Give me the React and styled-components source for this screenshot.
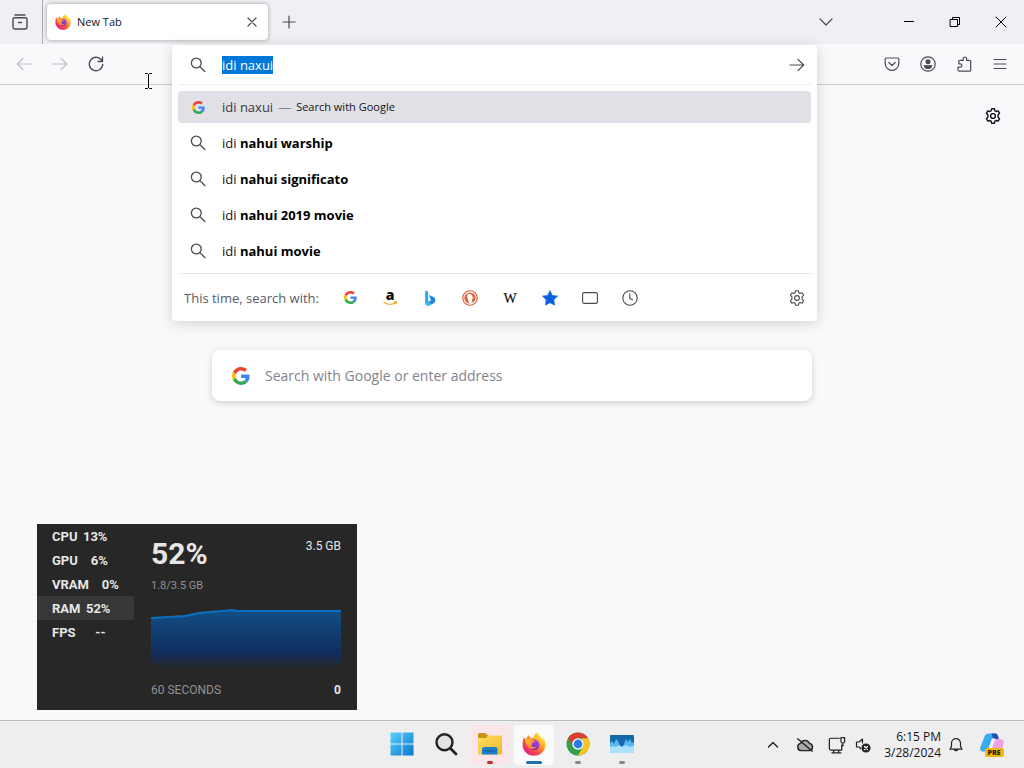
import React, { useEffect, useId, useRef } from "react";
import styled, { createGlobalStyle } from "styled-components";

const GlobalStyle = createGlobalStyle`
  * { box-sizing: border-box; }
  body {
    margin: 0;
    background: #f9f9fb;
    color: #15141a;
    font-family: "Open Sans", "Noto Sans", sans-serif;
    font-size: 13px;
  }
  button, input { font: inherit; color: inherit; }
  svg { display: block; flex: none; }
`;

/* ---------- shared parts ---------- */

const IconButton = styled.button`
  display: flex;
  align-items: center;
  justify-content: center;
  width: ${(p) => p.$w || 36}px;
  height: ${(p) => p.$h || 32}px;
  flex: none;
  padding: 0;
  border: 0;
  border-radius: 4px;
  background: transparent;
  color: ${(p) => p.$color || "#4a4a52"};
`;

const IconSlot = styled.span`
  display: flex;
  justify-content: center;
  width: 16px;
  flex: none;
  color: #4a4a52;
`;

const Line = ({ size = 16, width = 1.2, children }) => (
  <svg
    width={size}
    height={size}
    viewBox="0 0 16 16"
    fill="none"
    stroke="currentColor"
    strokeWidth={width}
    strokeLinecap="round"
    strokeLinejoin="round"
    aria-hidden="true"
  >
    {children}
  </svg>
);

/* ---------- icons ---------- */

const SearchIcon = () => (
  <Line width={1.3}>
    <circle cx="6.3" cy="6" r="4.9" />
    <path d="M9.9 9.6l4.9 4.9" />
  </Line>
);

const GearIcon = ({ width = 1.2 }) => (
  <Line width={width}>
    <path d="M6.6 0.8h2.8l.5 2 1.2.7 2-.7 1.5 2.5-1.500 1.400v2.600l1.500 1.400-1.500 2.500-2-.7-1.200.7-.5 2H6.600l-.5-2-1.200-.7-2 .7-1.500-2.500 1.500-1.400V6.700L1.400 5.300l1.500-2.500 2 .7 1.200-.7z" />
    <circle cx="8" cy="8" r="2.4" />
  </Line>
);

const ArrowIcon = ({ flip }) => (
  <Line size={16}>
    {flip ? <path d="M15 8H1.500M7 2.300L1.300 8 7 13.700" /> : <path d="M1 8h13.500M9 2.300L14.700 8 9 13.700" />}
  </Line>
);

const GoogleIcon = ({ size = 16 }) => (
  <svg width={size} height={size} viewBox="0 0 48 48" aria-hidden="true">
    <path fill="#ea4335" d="M24 9.500c3.540 0 6.710 1.220 9.210 3.600l6.850-6.850C35.900 2.380 30.470 0 24 0 14.620 0 6.510 5.380 2.560 13.220l7.980 6.190C12.430 13.720 17.740 9.500 24 9.500z" />
    <path fill="#4285f4" d="M46.980 24.550c0-1.570-.15-3.090-.38-4.550H24v9.020h12.940c-.58 2.960-2.260 5.480-4.780 7.180l7.730 6c4.510-4.180 7.090-10.360 7.090-17.650z" />
    <path fill="#fbbc05" d="M10.530 28.590c-.48-1.450-.76-2.990-.76-4.590s.27-3.140.76-4.590l-7.980-6.190C.92 16.460 0 20.120 0 24s.92 7.540 2.560 10.780z" />
    <path fill="#34a853" d="M24 48c6.480 0 11.930-2.130 15.890-5.810l-7.730-6c-2.150 1.450-4.920 2.300-8.160 2.300-6.260 0-11.570-4.220-13.470-9.910l-7.980 6.190C6.510 42.620 14.620 48 24 48z" />
  </svg>
);

const FirefoxIcon = ({ size }) => {
  const id = useId();
  return (
    <svg width={size} height={size} viewBox="0 0 24 24" aria-hidden="true">
      <defs>
        <linearGradient id={id + "a"} x1="0.850" y1="0.100" x2="0.150" y2="0.950">
          <stop offset="0" stopColor="#fff04a" />
          <stop offset="0.300" stopColor="#ffb029" />
          <stop offset="0.580" stopColor="#ff5a36" />
          <stop offset="1" stopColor="#e31587" />
        </linearGradient>
        <linearGradient id={id + "b"} x1="0.800" y1="0" x2="0.300" y2="1">
          <stop offset="0" stopColor="#b443e6" />
          <stop offset="1" stopColor="#5535c4" />
        </linearGradient>
        <linearGradient id={id + "c"} x1="0" y1="0" x2="1" y2="1">
          <stop offset="0" stopColor="#ffc928" />
          <stop offset="1" stopColor="#ff6636" />
        </linearGradient>
      </defs>
      <path fill={`url(#${id}a)`} d="M22.600 8.200c-.5-1.300-1.600-2.600-2.500-3 .7 1.400 1.100 2.700 1.200 3.600-1.300-3.300-3.600-4.600-5.400-7.500-.3-.5-.5-1-.5-1.300-2.500 1.500-3.500 4-3.700 5.500-1 .1-1.900.3-2.700.7-1.100-.8-2-2-2.100-3.100-1.200.8-1.800 1.900-2 3.200-.8.100-1.500.5-2 .9-.4-.4-.6-1.500-.6-2.200C1.200 6.500.6 9 .6 12.400.6 18.800 5.700 23.700 12 23.700s11.500-5 11.500-11.300c0-1.600-.3-3-.9-4.200z" />
      <circle cx="12.200" cy="12.800" r="5.200" fill={`url(#${id}b)`} />
      <path fill={`url(#${id}c)`} d="M3 7.700c2-1.200 4.600-1 6.200 0 1.300.9 3 .7 4.100 1-.1 1.400-2.500 1.800-3.100 2.400-.4.700.1 1.500-.9 2.300 1 1.700 3.300 1.900 5.600.8-1 2.500-4.200 3.500-7 2.100C4.700 14.700 3.700 11 3 7.700z" />
      <path fill="#ffcf33" d="M14.300 5.700c3.800.8 5.700 4.200 4.800 7.900 2-3.200.8-6.900-2.300-8.300z" />
    </svg>
  );
};

const AmazonIcon = () => (
  <svg width="16" height="28" viewBox="0 -6 16 28" aria-hidden="true">
    <text x="8" y="10" textAnchor="middle" fontFamily="Open Sans, sans-serif" fontWeight="800" fontSize="14" fill="#111">a</text>
    <path d="M1.500 12c3.500 3 9 3 12.300.5M12 12l2.500-.2-.5 2.300" fill="none" stroke="#e9b33b" strokeWidth="1.300" />
  </svg>
);

const BingIcon = () => (
  <svg width="16" height="16" viewBox="0 0 16 16" aria-hidden="true">
    <path d="M3.200 0.500l3 1.300v9.700L3.200 14.500z" fill="#2da3ee" />
    <path d="M7 5l4.500 2.100c2.700 1.500 2.200 5.200-.3 6.500l-3.700 1.800c-2 .7-4.300 0-4.300-2.400L9 10.500z" fill="#2583d8" />
    <path d="M3.200 12.500c.3 2.700 2.700 3.400 4.300 2.900l1.800-1-3.100-2.900z" fill="#37c3ea" />
  </svg>
);

const DuckIcon = () => (
  <svg width="16" height="16" viewBox="0 0 16 16" aria-hidden="true">
    <circle cx="8" cy="8" r="7.200" fill="#fff" stroke="#d95b37" strokeWidth="1.100" />
    <circle cx="8" cy="8" r="5.600" fill="#df643c" />
    <path d="M5.300 4.500c2-1.400 5-.5 5.100 2.200l1.500 1.200-2 .9.700 4.200c-1.200.6-2.300.7-3.400.4C6.300 10.500 4.800 7 5.300 4.500z" fill="#fff" />
    <path d="M8.500 8l3.500-.2-1.500 1.200z" fill="#f5b72f" />
    <path d="M9 11l2.300-.6v1.800z" fill="#59a648" />
  </svg>
);

const WikipediaIcon = () => (
  <svg width="18" height="18" viewBox="0 0 18 18" aria-hidden="true">
    <text x="9" y="14" textAnchor="middle" fontFamily="Liberation Serif, serif" fontSize="14" fill="#111" stroke="#111" strokeWidth="0.200">W</text>
  </svg>
);

const StarIcon = () => (
  <svg width="16" height="16" viewBox="0 0 16 16" aria-hidden="true">
    <path d="M8 .6l2.300 4.800 5.300.7-3.800 3.700.9 5.400L8 12.800l-4.700 2.400.9-5.400L.4 6.100l5.300-.7z" fill="#0a60df" stroke="#0a60df" strokeWidth="0.600" strokeLinejoin="round" />
  </svg>
);

const WindowsIcon = () => {
  const id = useId();
  return (
    <svg width="24" height="24" viewBox="0 0 24 24" aria-hidden="true">
      <defs>
        <linearGradient id={id} gradientUnits="userSpaceOnUse" x1="0" y1="0" x2="24" y2="24">
          <stop offset="0" stopColor="#5bd4fb" />
          <stop offset="1" stopColor="#0873cd" />
        </linearGradient>
      </defs>
      <path fill={`url(#${id})`} d="M.5.5h11v11H.5zM12.500 .5h11v11h-11zM.5 12.500h11v11H.5zM12.500 12.500h11v11h-11z" />
    </svg>
  );
};

const TaskSearchIcon = () => (
  <svg width="24" height="24" viewBox="0 0 24 24" fill="none" aria-hidden="true">
    <circle cx="10.500" cy="10.300" r="8" fill="#dfe1e4" stroke="#222" strokeWidth="2.400" />
    <path d="M16.500 16.500l5.500 5.500" stroke="#222" strokeWidth="2.800" strokeLinecap="round" />
  </svg>
);

const FolderIcon = () => {
  const id = useId();
  return (
    <svg width="26" height="24" viewBox="0 0 26 24" aria-hidden="true">
      <defs>
        <linearGradient id={id} x1="0" y1="0" x2="1" y2="1">
          <stop offset="0" stopColor="#ffdc60" />
          <stop offset="1" stopColor="#efb92c" />
        </linearGradient>
      </defs>
      <path d="M1 2.500A1.500 1.500 0 0 1 2.500 1h6l2.500 2.500V8H1z" fill="#cc9416" />
      <path d="M1 6h8l2-2.500h14V21a1.500 1.500 0 0 1-1.500 1.500h-21A1.500 1.500 0 0 1 1 21z" fill={`url(#${id})`} />
      <path d="M5 22.500v-5.500a2 2 0 0 1 2-2h11.500a2 2 0 0 1 2 2v5.500z" fill="#1c7fc9" />
      <path d="M7.500 19h10.500" stroke="#1562a5" strokeWidth="1.500" />
    </svg>
  );
};

const ChromeIcon = () => (
  <svg width="24" height="24" viewBox="0 0 48 48" aria-hidden="true">
    <circle cx="24" cy="24" r="23" fill="#34a04c" />
    <path d="M4.080 12.500A23 23 0 0 1 43.900 12.500H24a11.500 11.500 0 0 0-10 17.200z" fill="#dc3d31" />
    <path d="M43.900 12.500A23 23 0 0 1 24 47l10-17.300a11.500 11.500 0 0 0 0-11.400L30.500 12.500z" fill="#fbc420" />
    <circle cx="24" cy="24" r="11.500" fill="#fff" />
    <circle cx="24" cy="24" r="8.800" fill="#2c7be5" />
  </svg>
);

const MonitorIcon = () => (
  <svg width="26" height="20" viewBox="0 0 26 20" aria-hidden="true">
    <rect x="1" y="1" width="24" height="18" rx="1" fill="#1268aa" />
    <path d="M1 9l2-2 2 3 2-5 2 2 2 5 2 1 2-3 2-5 2 3 2-3 2 4 2-1v10.500H1z" fill="#58b9ee" />
    <path d="M1 13l3-1 3 1 3-2 3 2 4-2 3 2 5-1v6a1 1 0 0 1-1 1H2a1 1 0 0 1-1-1z" fill="#a9e2fc" />
  </svg>
);

const CopilotIcon = () => (
  <svg width="26" height="26" viewBox="0 0 26 26" aria-hidden="true">
    <path d="M5.500 4.500C6.300 2.500 7.500 1.500 9.500 1.500H16c2 0 2.700 1.500 3.200 3.500L20 8h-4.500l-3.500 9c-.7 1.800-1.500 2.500-3.500 2.500H4.500C1.500 19.500.6 17.500 1.400 15z" fill="#3aabef" />
    <path d="M12.500 1.500H16c2 0 2.700 1.500 3.200 3.500L20 8h-5.500z" fill="#2451b8" />
    <path d="M14.500 7H21c3 0 4.300 2 3.500 4.500L23 18H10.500z" fill="#efa3e5" />
    <path d="M13 6.500h3.500L12.500 17.500H9z" fill="#f5f2fa" />
    <rect x="6" y="16" width="19" height="9" rx="2" fill="#f2b70d" />
    <text x="15" y="23" textAnchor="middle" fontFamily="Open Sans, sans-serif" fontWeight="800" fontSize="7" fill="#251b00">PRE</text>
  </svg>
);

/* ---------- browser window ---------- */

const Screen = styled.div`
  display: flex;
  flex-direction: column;
  min-height: 100vh;
`;

const TabStrip = styled.header`
  display: flex;
  align-items: center;
  height: 44px;
  background: #f0f0f4;
`;

const ViewSlot = styled.div`
  display: flex;
  align-items: center;
  justify-content: center;
  width: 43px;
  height: 44px;
  padding-right: 2px;
  border-right: 1px solid #a9a9b4;
`;

const Tab = styled.div`
  display: flex;
  align-items: center;
  width: 221px;
  height: 36px;
  margin-left: 4px;
  padding: 0 0 0 8px;
  border-radius: 4px;
  background: #fff;
  box-shadow: 0 0 4px rgba(0, 0, 0, 0.35);
`;

const TabTitle = styled.span`
  flex: 1;
  padding-left: 6px;
  font-size: 11px;
  line-height: 20px;
`;

const WindowControls = styled.div`
  display: flex;
  align-items: center;
  margin-left: auto;
`;

const ListTabs = styled.div`
  padding-right: 42px;
`;

const Toolbar = styled.nav`
  display: flex;
  align-items: center;
  height: 41px;
  padding: 0 6px;
  border-bottom: 1px solid #cccccf;
`;

const UrlArea = styled.div`
  position: relative;
  flex: 1;
  align-self: stretch;
  margin: 0 57px 0 58px;
`;

const UrlPanel = styled.section`
  position: absolute;
  z-index: 2;
  top: 1px;
  left: 0;
  right: 0;
  padding: 0 6px;
  border-radius: 4px;
  background: #fff;
  box-shadow: 0 2px 14px rgba(0, 0, 0, 0.16);
`;

const UrlRow = styled.form`
  display: flex;
  align-items: center;
  height: 39px;
  padding-left: 12px;
`;

const UrlInput = styled.input`
  flex: 1;
  min-width: 0;
  height: 24px;
  margin-left: 16px;
  padding: 0;
  border: 0;
  outline: 0;
  background: transparent;
  &::selection { background: #0078d7; color: #fff; }
`;

const Results = styled.ul`
  display: flex;
  flex-direction: column;
  gap: 4px;
  margin: 0;
  padding: 6px 0;
  border-top: 1px solid #eeeef1;
  list-style: none;
`;

const Result = styled.li`
  display: flex;
  align-items: center;
  height: 32px;
  padding-left: 12px;
  border-radius: 4px;
  background: ${(p) => (p.$active ? "#e0e0e6" : "transparent")};
  color: ${(p) => (p.$active ? "#3a3944" : "#15141a")};
`;

const ResultText = styled.span`
  padding-left: 16px;
  line-height: 20px;
  b { color: #000; font-weight: 700; }
`;

const Action = styled.span`
  color: #15141a;
  font-size: 11px;
  line-height: 20px;
`;

const Dash = styled.span`
  padding: 0 5px;
  color: #85858f;
`;

const OneOffs = styled.footer`
  display: flex;
  align-items: center;
  height: 48px;
  margin: 0 0 0 3px;
  padding-left: 3px;
  border-top: 1px solid #e4e4e8;
`;

const OneOffLabel = styled.span`
  width: 146px;
  color: #5b5b66;
  line-height: 20px;
  white-space: nowrap;
`;

const Spacer = styled.div`
  flex: 1;
`;

const Page = styled.main`
  position: relative;
  flex: 1;
  display: flex;
  flex-direction: column;
`;

const PageTop = styled.div`
  display: flex;
  justify-content: flex-end;
  padding: 15px 13px 0;
`;

const HomeSearch = styled.label`
  display: flex;
  align-items: center;
  align-self: center;
  width: calc(100% - 48px);
  max-width: 600px;
  height: 51px;
  margin-top: 218px;
  padding: 0 20px;
  border-radius: 8px;
  background: #fff;
  box-shadow: 0 2px 6px rgba(58, 57, 68, 0.22);
`;

const HomeInput = styled.input`
  flex: 1;
  min-width: 0;
  height: 32px;
  margin-left: 15px;
  padding: 0;
  border: 0;
  outline: 0;
  background: transparent;
  font-size: 14px;
  &::placeholder { color: #83838c; opacity: 1; }
`;

/* ---------- performance overlay ---------- */

const Monitor = styled.aside`
  position: absolute;
  left: 37px;
  bottom: 10px;
  display: flex;
  width: 320px;
  height: 186px;
  background: #272727;
  color: #e6e6e6;
  font-family: Roboto, sans-serif;
`;

const Stats = styled.ul`
  width: 97px;
  margin: 0;
  padding: 0;
  list-style: none;
`;

const Stat = styled.li`
  display: flex;
  align-items: center;
  height: 24px;
  padding-left: 15px;
  background: ${(p) => (p.$active ? "#373737" : "transparent")};
  font-size: 13px;
  font-weight: 700;
`;

const StatValue = styled.span`
  min-width: 30px;
  padding-left: 5px;
  text-align: right;
`;

const Detail = styled.div`
  display: flex;
  flex: 1;
  flex-direction: column;
  padding: 12px 16px 10px 17px;
`;

const DetailRow = styled.div`
  display: flex;
  justify-content: space-between;
  font-size: 12px;
  line-height: 20px;
`;

const Big = styled.strong`
  font-size: 30px;
  line-height: 36px;
`;

const Muted = styled.span`
  color: #929292;
`;

const Usage = styled(Muted)`
  margin-top: 4px;
  font-size: 11px;
  line-height: 20px;
`;

const Chart = styled.svg`
  width: 100%;
  height: 64px;
  margin: 8px 0 12px;
`;

/* ---------- taskbar ---------- */

const Taskbar = styled.footer`
  display: grid;
  grid-template-columns: 1fr auto 1fr;
  align-items: center;
  height: 48px;
  border-top: 1px solid #bdbdc1;
  background: #eeeeef;
`;

const Apps = styled.div`
  grid-column: 2;
  display: flex;
  gap: 4px;
`;

const AppButton = styled.button`
  display: grid;
  grid-template-rows: 1fr 3px;
  justify-items: center;
  align-items: center;
  width: 40px;
  height: 40px;
  padding: 2px 0 1px;
  border: 0;
  border-radius: 4px;
  background: ${(p) => p.$bg || "transparent"};
`;

const Indicator = styled.span`
  width: ${(p) => p.$w}px;
  height: 3px;
  border-radius: 2px;
  background: ${(p) => p.$color};
`;

const Tray = styled.div`
  display: flex;
  align-items: center;
  justify-content: flex-end;
  padding-right: 7px;
`;

const Clock = styled.time`
  width: 68px;
  margin-right: 4px;
  font-size: 12px;
  line-height: 16px;
  text-align: right;
`;

const Pointer = styled.svg`
  position: absolute;
  z-index: 3;
  top: 73px;
  left: 144px;
`;

const suggestions = ["nahui warship", "nahui significato", "nahui 2019 movie", "nahui movie"];

const stats = [
  ["CPU", "13%"],
  ["GPU", "6%"],
  ["VRAM", "0%"],
  ["RAM", "52%"],
  ["FPS", "--"],
];

const engines = [
  ["Google", <GoogleIcon size={13} />],
  ["Amazon", <AmazonIcon />],
  ["Bing", <BingIcon />],
  ["DuckDuckGo", <DuckIcon />],
  ["Wikipedia", <WikipediaIcon />],
  ["Bookmarks", <StarIcon />],
  ["Tabs", <Line width={1.1}><rect x="0.600" y="2.600" width="14.800" height="10.800" rx="1.500" /></Line>],
  ["History", <Line width={1.1}><circle cx="8" cy="8" r="7.200" /><path d="M7.800 3.800v4.600l2.800 1.400" /></Line>],
];

const apps = [
  ["Start", <WindowsIcon />],
  ["Search", <TaskSearchIcon />],
  ["File Explorer", <FolderIcon />, 6, "#c42b2b", "#fae6e8"],
  ["Firefox", <FirefoxIcon size={24} />, 16, "#1a73ae", "#fbfbfb"],
  ["Chrome", <ChromeIcon />, 6, "#85858a"],
  ["Performance Monitor", <MonitorIcon />, 6, "#85858a"],
];

function AddressPanel() {
  const input = useRef(null);
  useEffect(() => {
    input.current.focus();
    input.current.select();
  }, []);
  return (
    <UrlPanel>
      <UrlRow onSubmit={(e) => e.preventDefault()}>
        <IconSlot><SearchIcon /></IconSlot>
        <UrlInput ref={input} aria-label="Address" defaultValue="idi naxui" spellCheck={false} />
        <IconButton $w={28} aria-label="Go"><ArrowIcon /></IconButton>
      </UrlRow>
      <Results>
        <Result $active>
          <IconSlot><GoogleIcon size={13} /></IconSlot>
          <ResultText>idi naxui</ResultText>
          <Dash>—</Dash>
          <Action>Search with Google</Action>
        </Result>
        {suggestions.map((s) => (
          <Result key={s}>
            <IconSlot><SearchIcon /></IconSlot>
            <ResultText>idi <b>{s}</b></ResultText>
          </Result>
        ))}
      </Results>
      <OneOffs>
        <OneOffLabel>This time, search with:</OneOffLabel>
        {engines.map(([name, icon]) => (
          <IconButton key={name} $w={40} aria-label={name}>{icon}</IconButton>
        ))}
        <Spacer />
        <IconButton $w={28} aria-label="Search settings"><GearIcon width={1.1} /></IconButton>
      </OneOffs>
    </UrlPanel>
  );
}

function PerformanceMonitor() {
  const id = useId();
  return (
    <Monitor>
      <Stats>
        {stats.map(([name, value]) => (
          <Stat key={name} $active={name === "RAM"}>
            {name}
            <StatValue>{value}</StatValue>
          </Stat>
        ))}
      </Stats>
      <Detail>
        <DetailRow><Big>52%</Big><span>3.5 GB</span></DetailRow>
        <Usage>1.8/3.5 GB</Usage>
        <Chart viewBox="0 0 190 64" preserveAspectRatio="none" aria-hidden="true">
          <defs>
            <linearGradient id={id} x1="0" y1="0" x2="0" y2="1">
              <stop offset="0" stopColor="#114f86" />
              <stop offset="0.750" stopColor="#122d5e" />
              <stop offset="1" stopColor="#272727" />
            </linearGradient>
          </defs>
          <path d="M0 14L34 12 48 9 82 6 86 7H190V64H0z" fill={`url(#${id})`} />
          <path d="M0 14L34 12 48 9 82 6 86 7H190" fill="none" stroke="#0a6fbf" strokeWidth="2" />
        </Chart>
        <DetailRow><Muted>60 SECONDS</Muted><b>0</b></DetailRow>
      </Detail>
    </Monitor>
  );
}

export default function App() {
  return (
    <Screen>
      <GlobalStyle />
      <TabStrip>
        <ViewSlot>
          <IconButton aria-label="Firefox View">
            <Line width={1.4}>
              <path d="M3 1h10M2.500 3.800h11a1.500 1.500 0 0 1 1.500 1.500v7.700a2 2 0 0 1-2 2H3a2 2 0 0 1-2-2V5.300a1.500 1.500 0 0 1 1.500-1.500zM6.500 8.500h3" />
            </Line>
          </IconButton>
        </ViewSlot>
        <Tab>
          <FirefoxIcon size={16} />
          <TabTitle>New Tab</TabTitle>
          <IconButton $w={32} aria-label="Close tab"><Line><path d="M4 4l8 8M12 4l-8 8" /></Line></IconButton>
        </Tab>
        <IconButton $w={42} aria-label="New tab"><Line><path d="M8 2v12M2 8h12" /></Line></IconButton>
        <WindowControls>
          <ListTabs>
            <IconButton aria-label="List all tabs"><Line><path d="M2 5l6 6 6-6" /></Line></IconButton>
          </ListTabs>
          <IconButton $w={46} $h={44} $color="#000" aria-label="Minimize"><Line width={1}><path d="M3.500 7.500h9" /></Line></IconButton>
          <IconButton $w={46} $h={44} $color="#000" aria-label="Restore"><Line width={1}><path d="M3.500 5.500h7v7h-7zM5.500 5.500v-2h7v7h-2" /></Line></IconButton>
          <IconButton $w={46} $h={44} $color="#000" aria-label="Close"><Line width={1}><path d="M3 3l10 10M13 3L3 13" /></Line></IconButton>
        </WindowControls>
      </TabStrip>

      <Toolbar>
        <IconButton aria-label="Back" $color="#bcbcc2"><ArrowIcon flip /></IconButton>
        <IconButton aria-label="Forward" $color="#bcbcc2"><ArrowIcon /></IconButton>
        <IconButton aria-label="Reload">
          <Line width={1.4}><path d="M14 5A6.700 6.700 0 1 0 14.700 8.500M14.500 1v4.500H10" /></Line>
        </IconButton>
        <UrlArea><AddressPanel /></UrlArea>
        <IconButton aria-label="Save to Pocket">
          <Line><path d="M2.500 2h11a1.300 1.300 0 0 1 1.300 1.300V7.500a6.800 6.800 0 0 1-13.600 0V3.300A1.300 1.300 0 0 1 2.500 2zM4.800 6.500L8 9.500l3.200-3" /></Line>
        </IconButton>
        <IconButton aria-label="Account">
          <Line>
            <circle cx="8" cy="8" r="7.200" />
            <circle cx="8" cy="5.700" r="1.900" fill="currentColor" />
            <path d="M4.200 9.800h7.600c-.5 1.800-2 2.700-3.800 2.700s-3.300-.9-3.800-2.700z" fill="currentColor" />
          </Line>
        </IconButton>
        <IconButton aria-label="Extensions">
          <Line><path d="M3.200 15.200h10.300a1.200 1.200 0 0 0 1.200-1.200V5.600a1.200 1.200 0 0 0-1.200-1.200h-2.900V2.700a1.700 1.700 0 0 0-3.400 0v1.700H4A1.200 1.200 0 0 0 2.800 5.600v2.200h1.400a1.700 1.700 0 0 1 0 3.400H2V14a1.200 1.200 0 0 0 1.200 1.200z" /></Line>
        </IconButton>
        <IconButton aria-label="Menu"><Line><path d="M2 3.500h12M2 8h12M2 12.500h12" /></Line></IconButton>
      </Toolbar>

      <Page>
        <PageTop>
          <IconButton $color="#15141a" aria-label="Personalize new tab"><GearIcon width={1.4} /></IconButton>
        </PageTop>
        <HomeSearch>
          <GoogleIcon size={18} />
          <HomeInput placeholder="Search with Google or enter address" />
        </HomeSearch>
        <PerformanceMonitor />
      </Page>

      <Taskbar>
        <Apps>
          {apps.map(([name, icon, w, color, bg]) => (
            <AppButton key={name} aria-label={name} $bg={bg}>
              {icon}
              {w && <Indicator $w={w} $color={color} />}
            </AppButton>
          ))}
        </Apps>
        <Tray>
          <IconButton $w={32} $color="#222" aria-label="Show hidden icons"><Line width={1.4}><path d="M3.500 10L8 5.500l4.500 4.500" /></Line></IconButton>
          <IconButton $w={32} $color="#222" aria-label="OneDrive">
            <Line size={18}><path d="M4.500 13a3.300 3.300 0 0 1-.4-6.500 4.200 4.200 0 0 1 7.800 0A3.300 3.300 0 0 1 12 13z" fill="#aaaaaa" /><path d="M1.500 2.500l13 11" /></Line>
          </IconButton>
          <IconButton $w={32} $color="#222" aria-label="Network">
            <Line size={18} width={1.1}><path d="M10 2H2.500a1.300 1.300 0 0 0-1.300 1.300v7.900a1.300 1.300 0 0 0 1.300 1.300h9.700V8M5 12.500V15M9.500 12.500V15M3.500 15h8M11.500 1.500h3.300v3.200a1.600 1.600 0 0 1-3.300 0zM13.200 6.300v2.500" /></Line>
          </IconButton>
          <IconButton $w={20} $color="#222" aria-label="Sound muted">
            <Line><path d="M7.500 6V2L4 5H1.500v5H4l1.500 1.500" /><circle cx="11" cy="11" r="4" fill="currentColor" /><path d="M9.500 9.500l3 3M12.500 9.500l-3 3" stroke="#fff" /></Line>
          </IconButton>
          <Clock>6:15 PM<br />3/28/2024</Clock>
          <IconButton $w={22} $color="#222" aria-label="Notifications">
            <Line><path d="M2 12.200h12l-1.500-2.800V6.200a4.500 4.500 0 0 0-9 0v3.200zM6.300 12.500a1.800 1.800 0 0 0 3.400 0" /></Line>
          </IconButton>
          <IconButton $w={50} aria-label="Copilot preview"><CopilotIcon /></IconButton>
        </Tray>
      </Taskbar>

      <Pointer width="9" height="16" viewBox="0 0 9 16" fill="none" stroke="#000" aria-hidden="true">
        <path d="M1 .5h2.500l1 1 1-1H8M4.500 1v14M1 15.500h2.500l1-1 1 1H8" />
      </Pointer>
    </Screen>
  );
}
